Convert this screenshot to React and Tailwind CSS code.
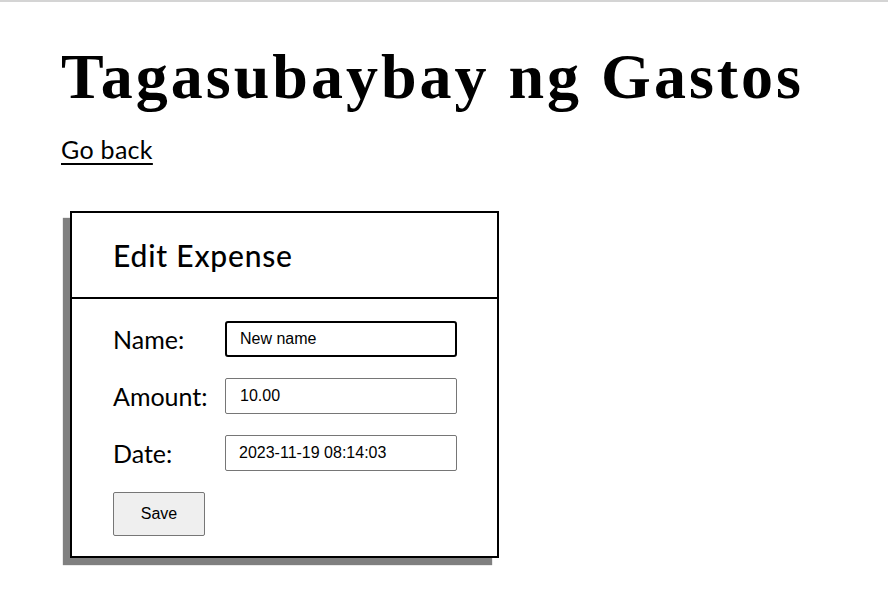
export default function App() {
  const label = "w-[112px] shrink-0 text-[25px] leading-[30px] text-black";
  const inputFont = { fontFamily: "'Liberation Sans', Arial, sans-serif" };
  return (
    <div className="min-h-[616px] w-full border-t-2 border-[#d4d4d4] bg-white" style={{ fontFamily: "Lato, 'Open Sans', sans-serif" }}>
      <div className="px-[61px] pt-[37px]">
        <h1 className="text-[64px] font-bold leading-[76px] tracking-[3px] text-black" style={{ fontFamily: "'Liberation Serif', serif" }}>
          Tagasubaybay ng Gastos
        </h1>
        <a href="#" className="mt-[20px] inline-block text-[25px] leading-[28px] tracking-[0.3px] text-black underline decoration-2 underline-offset-4">
          Go back
        </a>
        <div className="mt-[46px] ml-[9px] w-[429px] border-2 border-black shadow-[-7px_7px_1px_#808080]">
          <div className="flex h-[86px] items-center border-b-2 border-black px-[41px]">
            <h2 className="text-[30px] font-medium tracking-[0.8px] text-black">Edit Expense</h2>
          </div>
          <form className="flex flex-col gap-[21px] pl-[41px] pt-[22px] pb-[20px]" onSubmit={(e) => e.preventDefault()}>
            <div className="flex items-center">
              <label className={label}>Name:</label>
              <input
                defaultValue="New name"
                className="h-[36px] w-[232px] rounded-[3px] border-2 border-black px-[13px] text-[16px] text-black outline-none"
                style={inputFont}
              />
            </div>
            <div className="flex items-center">
              <label className={label}>Amount:</label>
              <input
                defaultValue="10.00"
                className="h-[36px] w-[232px] rounded-[2px] border border-[#767676] px-[14px] text-[16px] text-black outline-none"
                style={inputFont}
              />
            </div>
            <div className="flex items-center">
              <label className={label}>Date:</label>
              <input
                defaultValue="2023-11-19 08:14:03"
                className="h-[36px] w-[232px] rounded-[2px] border border-[#767676] px-[13px] text-[16px] text-black outline-none"
                style={inputFont}
              />
            </div>
            <div>
              <button
                type="submit"
                className="h-[44px] w-[92px] rounded-[2px] border border-[#767676] bg-[#efefef] text-[16px] text-black"
                style={inputFont}
              >
                Save
              </button>
            </div>
          </form>
        </div>
      </div>
    </div>
  );
}
